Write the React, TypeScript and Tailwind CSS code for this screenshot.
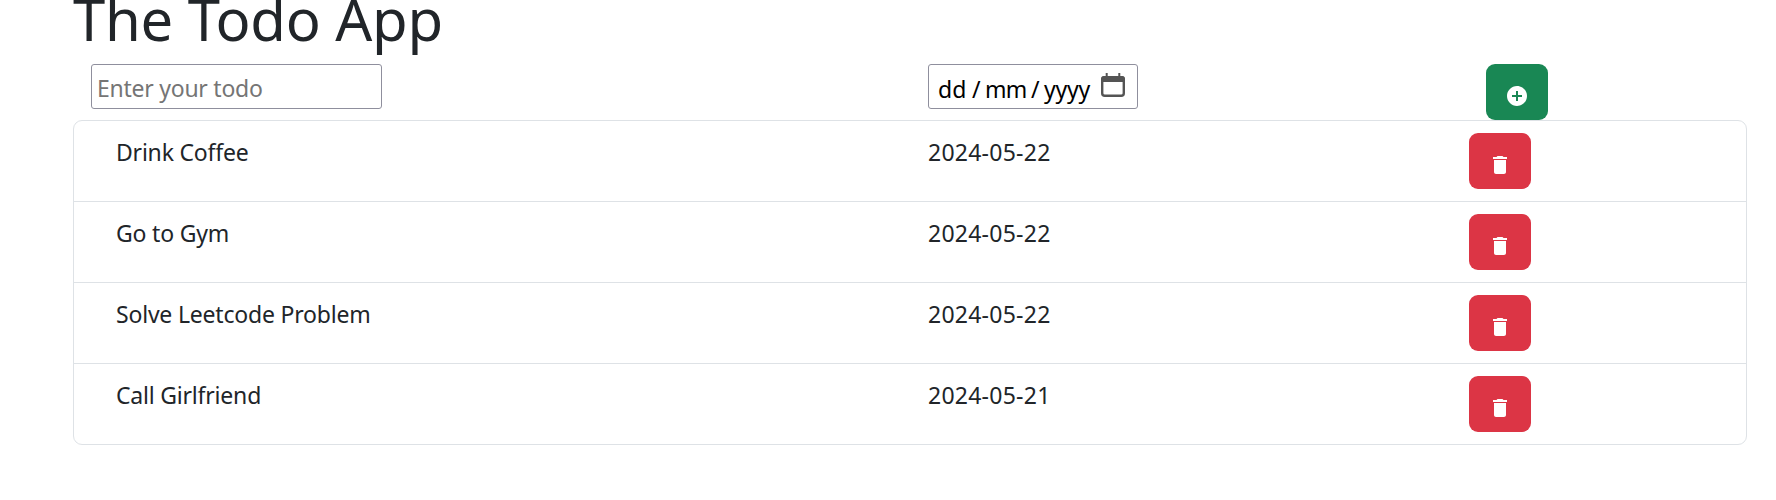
import { MdAddCircle, MdDelete } from "react-icons/md";

type Todo = { name: string; date: string };

const todos: Todo[] = [
  { name: "Drink Coffee", date: "2024-05-22" },
  { name: "Go to Gym", date: "2024-05-22" },
  { name: "Solve Leetcode Problem", date: "2024-05-22" },
  { name: "Call Girlfriend", date: "2024-05-21" },
];

function CalendarIcon() {
  return (
    <svg width="24" height="24" viewBox="0 0 24 24" fill="none">
      <rect x="1.2" y="4.2" width="21.6" height="18.6" rx="2.6" stroke="#545454" strokeWidth="2.4" />
      <path d="M0 9V6a3 3 0 0 1 3-3h18a3 3 0 0 1 3 3v3zM4.700 0h2v4h-2zM17.300 0h2v4h-2z" fill="#545454" />
    </svg>
  );
}

function AddTodo() {
  return (
    <div className="flex h-14 items-start">
      <div className="w-[837px] shrink-0">
        <input
          type="text"
          placeholder="Enter your todo"
          className="block h-[45px] w-[291px] rounded-[3px] border border-[#8f8f9d] bg-white px-[5px] pt-[3px] text-[23px] tracking-[-0.25px] placeholder:text-[#757575] placeholder:opacity-100 outline-none"
        />
      </div>
      <div className="w-[558px] shrink-0">
        <div className="flex h-[45px] w-[210px] rounded-[3px] border border-[#8f8f9d] bg-white pt-2 pl-[9px] text-[23px] text-black">
          <div className="-mt-px flex w-[163px] leading-[34px]">
            <span className="w-[33px]">dd</span>
            <span className="w-[14px] pl-px">/</span>
            <span className="w-[45px] tracking-[-0.8px]">mm</span>
            <span className="w-[14px] pl-px">/</span>
            <span className="tracking-[-0.2px]">yyyy</span>
          </div>
          <CalendarIcon />
        </div>
      </div>
      <button aria-label="Add" className="flex h-14 w-[62px] justify-center rounded-[9px] bg-[#198754] pt-5 text-white">
        <MdAddCircle size={24} />
      </button>
    </div>
  );
}

function TodoRow({ todo }: { todo: Todo }) {
  return (
    <li className="flex h-[81px] items-start border-b border-[#dee2e6] pt-3 pl-[42px] last:h-20 last:border-b-0">
      <div className="w-[812px] shrink-0 pt-px text-[23px] leading-[36px] tracking-[-0.2px]">{todo.name}</div>
      <div className="w-[541px] shrink-0 pt-px text-[23px] leading-[36px] tracking-[0.25px]">{todo.date}</div>
      <button aria-label="Delete" className="flex h-14 w-[62px] justify-center rounded-[9px] bg-[#dc3545] pt-5 text-white">
        <MdDelete size={24} />
      </button>
    </li>
  );
}

export default function App() {
  return (
    <main className="h-[500px] overflow-hidden bg-white pl-[73px] font-['Noto_Sans',sans-serif] text-[#212529]">
      <div className="flex h-16 flex-col justify-end">
        <h1 className="pb-[9px] text-[58px] leading-[72px] tracking-[-0.3px]">The Todo App</h1>
      </div>
      <div className="pl-[18px]">
        <AddTodo />
      </div>
      <ul className="w-[1674px] rounded-[9px] border border-[#dee2e6]">
        {todos.map((todo) => (
          <TodoRow key={todo.name} todo={todo} />
        ))}
      </ul>
    </main>
  );
}
